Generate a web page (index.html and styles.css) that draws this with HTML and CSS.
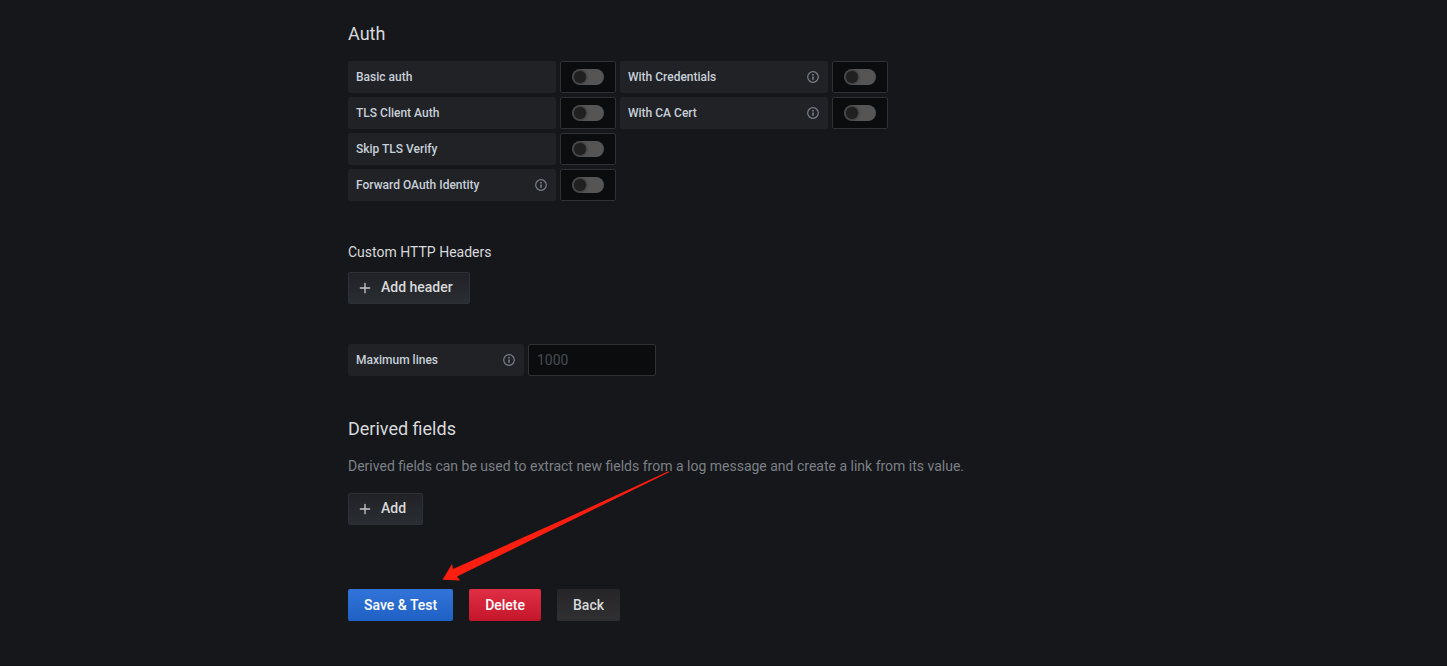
FILE: index.html
```html
<!DOCTYPE html>
<html lang="en">
<head>
<meta charset="utf-8">
<title>Data source settings</title>
<link rel="stylesheet" href="styles.css">
</head>
<body>
<svg class="defs" width="0" height="0" aria-hidden="true">
  <symbol id="info" viewBox="0 0 14 14"><circle cx="7" cy="7" r="5.300" fill="none" stroke="currentColor" stroke-width="1.200"/><path d="M6.200 4h1.600v1.500H6.200zM6.200 6.500h1.600v3.200H6.200z" fill="currentColor"/></symbol>
  <symbol id="plus" viewBox="0 0 24 24"><path d="M19,11H13V5a1,1,0,0,0-2,0v6H5a1,1,0,0,0,0,2h6v6a1,1,0,0,0,2,0V13h6a1,1,0,0,0,0-2Z"/></symbol>
</svg>
<main class="page">
  <h3 class="title">Auth</h3>
  <div class="rows">
    <div class="row">
      <div class="label">Basic auth</div><div class="switch"><span class="track"></span></div>
      <div class="label">With Credentials<svg class="info"><use href="#info"/></svg></div><div class="switch"><span class="track"></span></div>
    </div>
    <div class="row">
      <div class="label">TLS Client Auth</div><div class="switch"><span class="track"></span></div>
      <div class="label">With CA Cert<svg class="info"><use href="#info"/></svg></div><div class="switch"><span class="track"></span></div>
    </div>
    <div class="row">
      <div class="label">Skip TLS Verify</div><div class="switch"><span class="track"></span></div>
    </div>
    <div class="row">
      <div class="label">Forward OAuth Identity<svg class="info"><use href="#info"/></svg></div><div class="switch"><span class="track"></span></div>
    </div>
  </div>

  <h6 class="subtitle">Custom HTTP Headers</h6>
  <button class="btn secondary add-header"><svg class="plus"><use href="#plus"/></svg>Add header</button>

  <div class="row limits">
    <div class="label narrow">Maximum lines<svg class="info"><use href="#info"/></svg></div>
    <input class="input" type="text" placeholder="1000">
  </div>

  <h3 class="title derived">Derived fields</h3>
  <p class="description">Derived fields can be used to extract new fields from a log message and create a link from its value.</p>
  <button class="btn secondary add-field"><svg class="plus"><use href="#plus"/></svg>Add</button>

  <div class="actions">
    <button class="btn primary">Save &amp; Test</button>
    <button class="btn danger">Delete</button>
    <button class="btn back">Back</button>
  </div>
</main>
<svg class="arrow" width="230" height="112" viewBox="440 470 230 112"><path d="M668.500 471.300L569 517L453 569L452 564L442.500 579.700L460 580.500L457 576.500L570 521L669 472.300Z"/></svg>
</body>
</html>
```

FILE: styles.css
```css
* { box-sizing: border-box; }
body {
  margin: 0;
  height: 666px;
  overflow: hidden;
  background: #16171a;
  color: #d8d9da;
  font: 14px/21px Roboto, sans-serif;
}
.defs { position: absolute; }
.page {
  display: flex;
  flex-direction: column;
  align-items: flex-start;
  height: 666px;
  border-bottom: 1px solid #111215;
  padding: 22px 0 0 348px;
}
.title { margin: 0; font-size: 18px; line-height: 23px; font-weight: 400; }
.rows { display: flex; flex-direction: column; gap: 4px; margin-top: 16px; }
.row { display: flex; gap: 4px; }
.label {
  display: flex;
  align-items: center;
  justify-content: space-between;
  width: 208px;
  height: 32px;
  padding: 0 8px;
  border-radius: 2px;
  background: #202226;
  color: #c7d0d9;
  font-size: 12px;
  font-weight: 500;
}
.label.narrow { width: 176px; }
.info { width: 14px; height: 14px; color: #7b8087; }
.switch {
  display: flex;
  align-items: center;
  justify-content: center;
  width: 56px;
  height: 32px;
  border: 1px solid #2c3235;
  border-radius: 2px;
  background: #0b0c0e;
}
.track { width: 32px; height: 16px; border-radius: 8px; background: #555; }
.track::before {
  content: "";
  display: block;
  width: 12px;
  height: 12px;
  margin: 2px;
  border-radius: 50%;
  background: #202020;
  box-shadow: 0 0 3px #141414;
}
.subtitle { margin: 41px 0 0; font-size: 14px; line-height: 21px; font-weight: 400; }
.btn {
  display: flex;
  align-items: center;
  height: 32px;
  padding: 0 16px;
  border: 0;
  border-radius: 2px;
  color: #fff;
  font: 500 14px/30px Roboto, sans-serif;
}
.secondary {
  padding: 0 16px 2px 8px;
  border: 1px solid #2c3235;
  background: linear-gradient(#202226, #2a2d31);
  color: #d8d9da;
}
.plus { width: 16px; height: 16px; margin: 2px 8px 0 0; fill: #c7c8c9; }
.add-header { margin-top: 9px; }
.limits { margin-top: 40px; }
.input {
  width: 128px;
  height: 32px;
  padding: 0 8px;
  border: 1px solid #2c3235;
  border-radius: 2px;
  background: #0b0c0e;
  color: #c7d0d9;
  font: 14px Roboto, sans-serif;
}
.input::placeholder { color: #464c54; }
.derived { margin-top: 41px; }
.description { margin: 16px 0 0; color: #7b8087; }
.add-field { margin-top: 16px; }
.actions { display: flex; gap: 16px; margin-top: 64px; }
.primary { background: linear-gradient(#3274d9, #1f60c4); }
.danger { background: linear-gradient(#e02f44, #c4162a); }
.back { background: linear-gradient(#262628, #303032); color: #d8d9da; }
.arrow { position: absolute; left: 440px; top: 470px; fill: #ff1e10; }
```
